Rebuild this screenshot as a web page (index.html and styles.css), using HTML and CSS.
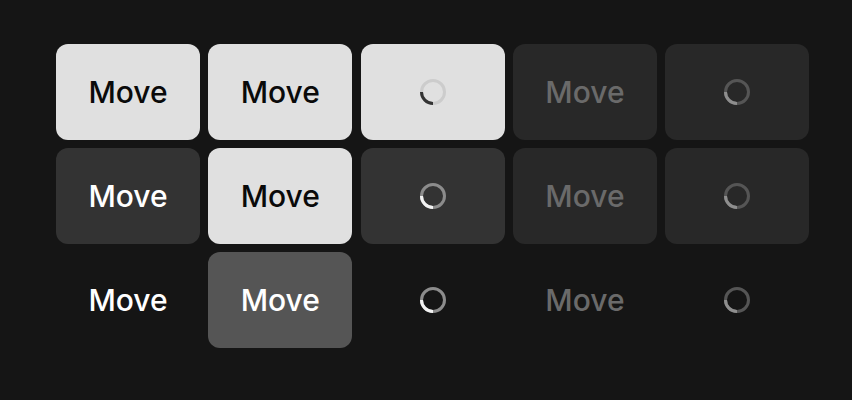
FILE: index.html
```html
<!DOCTYPE html>
<html>
<head>
<meta charset="utf-8">
<link rel="stylesheet" href="styles.css">
</head>
<body>
<div class="grid">
  <button class="btn light">Move</button>
  <button class="btn light">Move</button>
  <button class="btn light"><svg class="spin" viewBox="0 0 26 26"><circle class="track" cx="13" cy="13" r="11.5"/><path class="arc" d="M1.5 13 A11.5 11.5 0 0 0 13 24.5"/></svg></button>
  <button class="btn disabled">Move</button>
  <button class="btn disabled"><svg class="spin" viewBox="0 0 26 26"><circle class="track" cx="13" cy="13" r="11.5"/><path class="arc" d="M1.5 13 A11.5 11.5 0 0 0 13 24.5"/></svg></button>

  <button class="btn dark">Move</button>
  <button class="btn light">Move</button>
  <button class="btn dark"><svg class="spin" viewBox="0 0 26 26"><circle class="track" cx="13" cy="13" r="11.5"/><path class="arc" d="M1.5 13 A11.5 11.5 0 0 0 13 24.5"/></svg></button>
  <button class="btn disabled">Move</button>
  <button class="btn disabled"><svg class="spin" viewBox="0 0 26 26"><circle class="track" cx="13" cy="13" r="11.5"/><path class="arc" d="M1.5 13 A11.5 11.5 0 0 0 13 24.5"/></svg></button>

  <button class="btn ghost">Move</button>
  <button class="btn gray">Move</button>
  <button class="btn ghost"><svg class="spin" viewBox="0 0 26 26"><circle class="track" cx="13" cy="13" r="11.5"/><path class="arc" d="M1.5 13 A11.5 11.5 0 0 0 13 24.5"/></svg></button>
  <button class="btn ghost-disabled">Move</button>
  <button class="btn ghost-disabled"><svg class="spin" viewBox="0 0 26 26"><circle class="track" cx="13" cy="13" r="11.5"/><path class="arc" d="M1.5 13 A11.5 11.5 0 0 0 13 24.5"/></svg></button>
</div>
</body>
</html>
```
FILE: styles.css
```css
html, body {
  margin: 0;
  padding: 0;
  background: #151515;
  width: 852px;
  height: 400px;
  overflow: hidden;
}
.grid {
  display: grid;
  grid-template-columns: repeat(5, 144px);
  grid-auto-rows: 96px;
  column-gap: 8.3px;
  row-gap: 8px;
  padding: 44px 0 0 56px;
}
.btn {
  border: none;
  border-radius: 12px;
  font-family: Inter, "Noto Sans", sans-serif;
  font-size: 30px;
  font-weight: 500;
  letter-spacing: 0;
  display: flex;
  align-items: center;
  justify-content: center;
  padding: 0;
  margin: 0;
}
.spin {
  width: 26px;
  height: 26px;
  fill: none;
  stroke-width: 3;
}
.light { background: #e0e0e0; color: #0a0a0a; }
.light .track { stroke: #cccccc; }
.light .arc { stroke: #333333; }
.dark { background: #333333; color: #ffffff; }
.dark .track, .ghost .track { stroke: #8c8c8c; }
.dark .arc, .ghost .arc { stroke: #f2f2f2; }
.gray { background: #555555; color: #ffffff; }
.ghost { background: transparent; color: #ffffff; }
.disabled { background: #282828; color: #6a6a6a; }
.ghost-disabled { background: transparent; color: #6a6a6a; }
.disabled .track, .ghost-disabled .track { stroke: #555555; }
.disabled .arc, .ghost-disabled .arc { stroke: #8e8e8e; }
```
